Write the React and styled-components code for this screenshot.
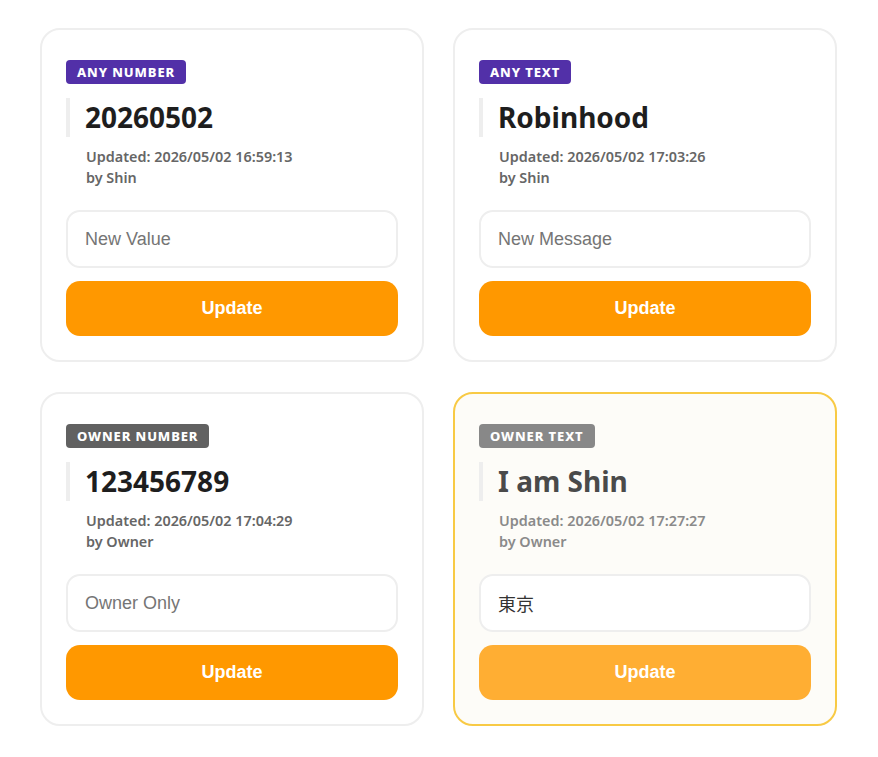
import React, { useState } from 'react';
import styled, { createGlobalStyle } from 'styled-components';

const GlobalStyle = createGlobalStyle`
  body {
    margin: 0;
    background: #ffffff;
    font-family: 'Open Sans', 'Noto Sans', sans-serif;
  }
`;

const Grid = styled.div`
  display: grid;
  grid-template-columns: repeat(2, 384px);
  column-gap: 29px;
  row-gap: 30px;
  padding: 28px 40px;
`;

const Card = styled.div`
  box-sizing: border-box;
  height: 334px;
  border: 2px solid ${({ $active }) => ($active ? '#f8ca45' : '#eeeeee')};
  background: ${({ $active }) => ($active ? '#fdfcf8' : '#ffffff')};
  border-radius: 20px;
  padding: 30px 24px 24px;
  display: flex;
  flex-direction: column;
`;

const Badge = styled.span`
  align-self: flex-start;
  height: 24px;
  line-height: 24px;
  padding: 0 11px;
  border-radius: 4px;
  background: ${({ $color }) => $color};
  color: #ffffff;
  font-family: 'Noto Sans', sans-serif;
  font-size: 13px;
  font-weight: 800;
  letter-spacing: 0.9px;
`;

const Value = styled.div`
  margin-top: 14px;
  border-left: 4px solid #eeeeee;
  padding-left: 15px;
  height: 39px;
  line-height: 39px;
  font-family: 'Noto Sans', sans-serif;
  font-size: 28px;
  font-weight: 700;
  color: ${({ $muted }) => ($muted ? '#4a4a4a' : '#1e1e1e')};
`;

const Meta = styled.div`
  margin-top: 9px;
  padding-left: 20px;
  font-family: 'Noto Sans', sans-serif;
  font-size: 14.4px;
  font-weight: 600;
  line-height: 21px;
  color: ${({ $muted }) => ($muted ? '#8a8a8a' : '#666666')};
`;

const Input = styled.input`
  box-sizing: border-box;
  margin-top: 22px;
  width: 100%;
  height: 58px;
  border: 2px solid #eeeeee;
  border-radius: 14px;
  background: #ffffff;
  padding: 0 17px;
  font-family: 'Liberation Sans', 'Noto Sans CJK JP', sans-serif;
  font-size: 18px;
  color: #333333;
  outline: none;

  &::placeholder {
    color: #757575;
  }
`;

const Button = styled.button`
  margin-top: 13px;
  width: 100%;
  height: 55px;
  border: none;
  border-radius: 14px;
  background: ${({ $muted }) => ($muted ? '#ffae33' : '#ff9800')};
  color: #ffffff;
  font-family: 'Liberation Sans', Arial, sans-serif;
  font-size: 18px;
  font-weight: 700;
  cursor: pointer;
`;

const items = [
  {
    badge: 'ANY NUMBER',
    color: '#5230a8',
    value: '20260502',
    updated: '2026/05/02 16:59:13',
    by: 'Shin',
    placeholder: 'New Value',
  },
  {
    badge: 'ANY TEXT',
    color: '#5230a8',
    value: 'Robinhood',
    updated: '2026/05/02 17:03:26',
    by: 'Shin',
    placeholder: 'New Message',
  },
  {
    badge: 'OWNER NUMBER',
    color: '#616161',
    value: '123456789',
    updated: '2026/05/02 17:04:29',
    by: 'Owner',
    placeholder: 'Owner Only',
  },
  {
    badge: 'OWNER TEXT',
    color: '#888888',
    value: 'I am Shin',
    updated: '2026/05/02 17:27:27',
    by: 'Owner',
    placeholder: 'Owner Only',
    initial: '東京',
    active: true,
  },
];

function ValueCard({ item }) {
  const [text, setText] = useState(item.initial || '');
  return (
    <Card $active={item.active}>
      <Badge $color={item.color}>{item.badge}</Badge>
      <Value $muted={item.active}>{item.value}</Value>
      <Meta $muted={item.active}>
        Updated: {item.updated}
        <br />
        by {item.by}
      </Meta>
      <Input
        type="text"
        placeholder={item.placeholder}
        value={text}
        onChange={(e) => setText(e.target.value)}
      />
      <Button $muted={item.active}>Update</Button>
    </Card>
  );
}

export default function App() {
  return (
    <>
      <GlobalStyle />
      <Grid>
        {items.map((item) => (
          <ValueCard key={item.badge} item={item} />
        ))}
      </Grid>
    </>
  );
}
